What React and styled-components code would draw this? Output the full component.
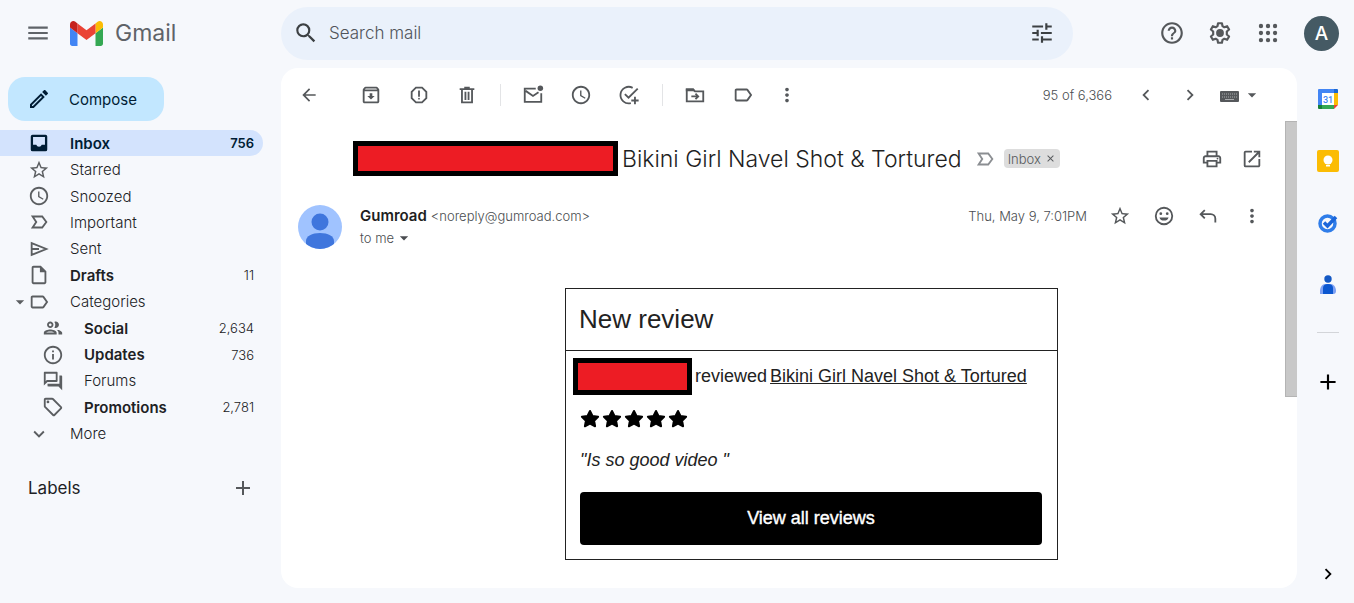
import React from "react";
import styled, { createGlobalStyle } from "styled-components";
import {
  MdMenu, MdOutlineEdit, MdStarBorder, MdAccessTime,
  MdOutlineInsertDriveFile, MdLabelOutline, MdOutlinePeople, MdInfoOutline, MdOutlineForum,
  MdExpandMore, MdAdd, MdSearch, MdTune, MdHelpOutline, MdArrowBack,
  MdOutlineArchive, MdOutlineReport, MdMoreVert, MdChevronLeft, MdChevronRight,
  MdArrowDropDown, MdOutlinePrint, MdOpenInNew, MdOutlineSell, MdClose,
} from "react-icons/md";

const UI = `Inter, "Noto Sans", sans-serif`;
const MAIL = `"Liberation Sans", Arial, sans-serif`;

const GlobalStyle = createGlobalStyle`
  * { box-sizing: border-box; }
  html, body, #root { height: 100%; }
  body { margin: 0; background: #f6f8fc; color: #202124; font-family: ${UI}; font-size: 15px; }
  button { font: inherit; color: inherit; border: 0; padding: 0; background: none; cursor: pointer; }
  a { color: inherit; text-decoration: none; }
  h1, h2, h3, p, ul { margin: 0; padding: 0; font-weight: 400; }
  ul { list-style: none; }
  svg { display: block; flex: none; }
`;

const Page = styled.div`
  min-height: 100%;
  display: flex;
  flex-direction: column;
`;
const Header = styled.header`
  display: flex;
  align-items: center;
  height: 66px;
  margin-bottom: 2px;
  padding-right: 15px;
`;
const Brand = styled.div`
  display: flex;
  align-items: center;
  flex: none;
  width: 281px;
  padding-left: 14px;
  color: #5f6368;
`;
const Logo = styled.a`
  display: flex;
  align-items: center;
  gap: 12px;
  margin-left: 8px;
  font-size: 23px;
  color: #5f6368;
`;
const IconButton = styled.button`
  display: flex;
  align-items: center;
  justify-content: center;
  flex: none;
  width: ${(p) => p.$w || 48}px;
  height: 34px;
  color: ${(p) => p.$color || "#55585b"};
`;
const Search = styled.form`
  display: flex;
  align-items: center;
  flex: 1;
  max-width: 792px;
  height: 53px;
  padding: 0 7px 0 2px;
  border-radius: 27px;
  background: #eaf1fb;
`;
const SearchInput = styled.input`
  flex: 1;
  min-width: 0;
  border: 0;
  outline: 0;
  padding: 0;
  background: none;
  font: 300 17px ${UI};
  color: #444746;
  &::placeholder { color: #50545a; opacity: 1; }
`;
const HeaderActions = styled.div`
  display: flex;
  align-items: center;
  margin-left: auto;
`;
const Account = styled.button`
  width: 35px;
  height: 35px;
  margin-left: 12px;
  border-radius: 50%;
  background: #455a64;
  color: #fff;
  font-size: 19px;
  font-weight: 500;
`;

const Body = styled.div`
  display: flex;
  flex: 1;
`;
const Sidebar = styled.aside`
  flex: none;
  width: 281px;
  padding: 9px 18px 0 0;
`;
const Compose = styled.button`
  display: flex;
  align-items: center;
  gap: 18px;
  width: 156px;
  height: 44px;
  margin: 0 0 9px 8px;
  padding-left: 19px;
  border-radius: 17px;
  background: #c2e7ff;
  color: #001d35;
`;
const NavList = styled.ul`
  display: grid;
  grid-auto-rows: 1fr;
  min-height: 317px;
`;
const NavLink = styled.a`
  display: flex;
  align-items: center;
  height: 100%;
  padding: 0 9px 0 ${(p) => (p.$nested ? 28 : 14)}px;
  border-radius: 0 13px 13px 0;
  background: ${(p) => (p.$active ? "#d3e3fd" : "none")};
  color: ${(p) => (p.$active ? "#001d35" : "#202124")};
  font-weight: ${(p) => (p.$bold ? 600 : 300)};
`;
const NavIcon = styled.span`
  position: relative;
  display: flex;
  justify-content: center;
  width: 50px;
  color: ${(p) => (p.$active ? "#001d35" : "#5b5e61")};
`;
const Caret = styled.span`
  position: absolute;
  left: -4px;
  top: 1px;
`;
const NavLabel = styled.span`
  flex: 1;
  padding-left: 6px;
`;
const Count = styled.span`
  font-size: 13px;
  font-weight: ${(p) => (p.$active ? 600 : 300)};
`;
const LabelsHead = styled.div`
  display: flex;
  align-items: center;
  justify-content: space-between;
  height: 40px;
  margin-top: 21px;
  padding-left: 28px;
  color: #202124;
`;
const LabelsTitle = styled.h2`
  font-size: 17px;
`;

const Main = styled.main`
  display: flex;
  flex-direction: column;
  flex: 1;
  min-width: 0;
  margin-bottom: 15px;
  border-radius: 17px;
  background: #fff;
  overflow: hidden;
`;
const Toolbar = styled.div`
  display: flex;
  align-items: center;
  height: 53px;
  padding: 0 35px 0 4px;
`;
const Group = styled.div`
  display: flex;
  align-items: center;
  margin-left: ${(p) => p.$gap || 0}px;
`;
const Divider = styled.span`
  width: 1px;
  height: 22px;
  margin: 0 8px 0 9px;
  background: #e3e4e6;
`;
const Pager = styled.div`
  display: flex;
  align-items: center;
  margin-left: auto;
  font-size: 13px;
  font-weight: 300;
  color: #4a4d50;
`;
const InputTools = styled.button`
  display: flex;
  align-items: center;
  margin-left: 6px;
  color: #55585b;
`;

const Scroll = styled.div`
  display: flex;
  flex: 1;
`;
const Track = styled.div`
  width: 12px;
`;
const Thumb = styled.div`
  height: 59%;
  background: #c8c8c8;
  border: solid #b4b4b4;
  border-width: 1px 0 1px 1px;
`;
const Thread = styled.article`
  flex: 1;
  min-width: 0;
`;
const SubjectRow = styled.div`
  display: flex;
  align-items: center;
  padding: 20px 13px 0 72px;
`;
const Redaction = styled.span`
  flex: none;
  width: ${(p) => p.$w}px;
  height: ${(p) => p.$h}px;
  border: 5px solid #000;
  background: #ed1c24;
`;
const Subject = styled.h1`
  margin: 0 12px 0 4px;
  font-size: 23px;
  line-height: 32px;
  font-weight: 300;
  white-space: nowrap;
  color: #1f1f1f;
`;
const Chip = styled.button`
  display: flex;
  align-items: center;
  gap: 4px;
  height: 19px;
  margin-left: 8px;
  padding: 0 4px;
  border-radius: 4px;
  background: #ddd;
  color: #55585b;
  font-size: 13px;
  font-weight: 300;
`;
const Actions = styled.div`
  display: flex;
  align-items: center;
  margin-left: auto;
`;
const SenderRow = styled.div`
  display: flex;
  align-items: flex-start;
  padding: 23px 11px 0 17px;
`;
const SenderText = styled.div`
  padding: 6px 0 0 18px;
  font-size: 13px;
  font-weight: 300;
  line-height: 22px;
  color: #4a4d50;
`;
const SenderName = styled.h3`
  display: inline;
  margin-right: 4px;
  font-size: 15px;
  font-weight: 600;
  color: #1f1f1f;
`;
const Recipient = styled.button`
  display: flex;
  align-items: center;
`;
const SenderAvatar = styled.span`
  margin-top: 6px;
`;
const DateText = styled.time`
  margin-right: 11px;
  font-size: 13px;
  font-weight: 300;
  color: #4a4d50;
`;
const MailBody = styled.div`
  display: flex;
  justify-content: center;
  padding: 39px 22px 27px 79px;
  font-family: ${MAIL};
  font-size: 18px;
  color: #222;
`;
const ReviewCard = styled.section`
  flex: 0 1 493px;
  border: 1px solid #222;
`;
const ReviewTitle = styled.h2`
  padding: 0 13px;
  border-bottom: 1px solid #222;
  font-size: 26px;
  line-height: 61px;
`;
const ReviewContent = styled.div`
  padding: 7px 15px 14px 14px;
`;
const ReviewLine = styled.p`
  display: flex;
  align-items: center;
  gap: 3px;
  margin-left: -7px;
  white-space: nowrap;
`;
const ReviewLink = styled.a`
  text-decoration: underline;
`;
const Stars = styled.div`
  display: flex;
  gap: 2px;
  margin-top: 14px;
  color: #000;
`;
const Quote = styled.p`
  margin: 20px 0 21px;
  line-height: 22px;
  font-style: italic;
`;
const ViewAll = styled.button`
  width: 100%;
  height: 53px;
  border-radius: 4px;
  background: #000;
  color: #fff;
  -webkit-text-stroke: 0.4px #fff;
`;

const Rail = styled.aside`
  display: flex;
  flex-direction: column;
  align-items: center;
  flex: none;
  width: 57px;
  padding: 14px 0 12px 5px;
`;
const RailApps = styled.div`
  display: flex;
  flex-direction: column;
  gap: 28px;
`;
const RailLine = styled.hr`
  width: 22px;
  margin: 30px 0 32px;
  border: 0;
  border-top: 1px solid #d3d5d9;
`;
const RailBottom = styled.div`
  margin-top: auto;
`;

const Svg = ({ size = 22, box = 24, children, ...rest }) => (
  <svg width={size} height={size} viewBox={`0 0 ${box} ${box}`} fill="none" stroke="currentColor" strokeWidth="2" {...rest}>
    {children}
  </svg>
);

const GmailMark = () => (
  <svg width="33" height="25" viewBox="52 42 88 66">
    <path fill="#4285f4" d="M58 108h14V74L52 59v43c0 3.32 2.69 6 6 6" />
    <path fill="#34a853" d="M120 108h14c3.32 0 6-2.69 6-6V59l-20 15" />
    <path fill="#fbbc04" d="M120 48v26l20-15v-8c0-7.42-8.47-11.65-14.4-7.2" />
    <path fill="#ea4335" d="M72 74V48l24 18 24-18v26L96 92" />
    <path fill="#c5221f" d="M52 51v8l20 15V48l-5.6-4.2c-5.94-4.45-14.4-.22-14.4 7.2" />
  </svg>
);
const InboxTray = () => (
  <Svg>
    <path
      fill="currentColor"
      stroke="none"
      fillRule="evenodd"
      d="M5 3h14a2 2 0 0 1 2 2v14a2 2 0 0 1-2 2H5a2 2 0 0 1-2-2V5a2 2 0 0 1 2-2zM5.500 5.500V14H9a3.200 3.200 0 0 0 6 0h3.500V5.500z"
    />
  </Svg>
);
const Important = ({ size = 22, ...rest }) => (
  <Svg size={size} {...rest}><path d="M5 6h10.500l4.500 6-4.500 6H5l4-6z" /></Svg>
);
const Send = () => (
  <Svg><path d="M4 5.500L20 12 4 18.500zM4 12h8" /></Svg>
);
const Apps = () => (
  <Svg size={26} fill="currentColor" stroke="none">
    {[5.5, 12, 18.5].map((y) => [5.5, 12, 18.5].map((x) => <circle key={`${x}-${y}`} cx={x} cy={y} r="2" />))}
  </Svg>
);
const Keyboard = () => (
  <svg width="24" height="24" viewBox="0 0 24 24">
    <rect x="2" y="8" width="19" height="11" rx="1" fill="#55585b" />
    <path d="M4 11h15M4 14h15" stroke="#a9abad" strokeWidth="1" strokeDasharray="1 1" />
    <path d="M7 16.500h9" stroke="#a9abad" />
  </svg>
);
const Trash = () => (
  <Svg><path d="M6.5 6.5v13.5h11V6.5M4 5.5h16M9 4h6M10.3 8.5v9M13.7 8.5v9" /></Svg>
);
const MailUnread = () => (
  <Svg>
    <path d="M15 5H3v14.500h18V10M4 7.500l8 5.500 6-4" />
    <circle cx="20" cy="4.500" r="3" fill="currentColor" stroke="none" />
  </Svg>
);
const AddTask = () => (
  <Svg><path d="M16 4.200A9 9 0 1 0 14 20.800M7.500 11l4 4L21.500 5M18.500 14v8M14.500 18h8" /></Svg>
);
const MoveTo = () => (
  <Svg>
    <path d="M3 6h7l2 2h9v11H3zM8 13.500h7M12.500 10.500l3 3-3 3" />
    <path d="M2 5h8.500l2 3H2z" fill="currentColor" stroke="none" />
  </Svg>
);
const Gear = () => (
  <Svg size={26}>
    <path strokeLinejoin="round" d="M10.200 3h3.600l.5 2.700 1.700 1 2.600-1 1.800 3.100-2.100 1.800v2.800l2.100 1.800-1.800 3.100-2.600-1-1.700 1-.5 2.700h-3.600l-.5-2.700-1.700-1-2.600 1-1.800-3.100 2.100-1.800v-2.800L3.600 8.800l1.800-3.100 2.600 1 1.700-1z" />
    <circle cx="12" cy="12" r="3.600" fill="currentColor" stroke="none" />
  </Svg>
);
const Smile = () => (
  <Svg>
    <circle cx="12" cy="12" r="9" />
    <circle cx="8.500" cy="9.500" r="1.500" fill="currentColor" stroke="none" />
    <circle cx="15.500" cy="9.500" r="1.500" fill="currentColor" stroke="none" />
    <path d="M7 13.500h10a5.300 5.300 0 0 1-10 0z" fill="currentColor" stroke="none" />
  </Svg>
);
const ReplyArrow = () => (
  <Svg><path d="M8.500 5.500l-4.500 4.500 4.500 4.500M4 10h11a5 5 0 0 1 5 5v4" /></Svg>
);
const Person = () => (
  <svg width="44" height="44" viewBox="0 0 44 44">
    <clipPath id="round"><circle cx="22" cy="22" r="22" /></clipPath>
    <g clipPath="url(#round)">
      <rect width="44" height="44" fill="#a0c3ff" />
      <circle cx="22" cy="17" r="8.500" fill="#3f76dd" />
      <path fill="#3f76dd" d="M8 44V36c0-5 6-8 14-8s14 3 14 8v8z" />
    </g>
  </svg>
);
const Calendar = () => (
  <svg width="22" height="22" viewBox="0 0 22 22">
    <path fill="#4285f4" d="M2 1h15v4H5v12H1V2a1 1 0 0 1 1-1z" />
    <path fill="#1967d2" d="M17 1h3a1 1 0 0 1 1 1v3h-4z" />
    <path fill="#fbbc04" d="M17 5h4v12h-4z" />
    <path fill="#34a853" d="M5 17h12v4H5z" />
    <path fill="#188038" d="M1 17h4v4H2a1 1 0 0 1-1-1z" />
    <path fill="#ea4335" d="M17 17h4l-4 4z" />
    <path fill="#fff" d="M5 5h12v12H5z" />
    <text x="11" y="14.500" textAnchor="middle" fontFamily="Roboto, sans-serif" fontSize="9" fontWeight="500" fill="#4285f4">31</text>
  </svg>
);
const Keep = () => (
  <svg width="22" height="22" viewBox="0 0 22 22">
    <rect x="0" y="0" width="22" height="22" rx="2" fill="#fbbc04" />
    <circle cx="11" cy="10" r="4.500" fill="#fff" />
    <path fill="#fff" d="M9 13h4v1H9zM9 15h4v1.500H9z" />
  </svg>
);
const Tasks = () => (
  <svg width="22" height="22" viewBox="0 0 22 22" fill="none">
    <circle cx="10.500" cy="11.500" r="7.500" stroke="#2f7de9" strokeWidth="3.500" />
    <path d="M7 10.500l3.500 3.500L19 5" stroke="#1b66da" strokeWidth="3.500" />
  </svg>
);
const Contacts = () => (
  <svg width="22" height="22" viewBox="0 0 22 22">
    <circle cx="11" cy="5" r="3.700" fill="#1358c4" />
    <path fill="#7ea1f3" d="M3 20v-3c0-4 2.500-7 5-7h6c2.500 0 5 3 5 7 0 2-1 3-2.500 3z" />
    <path fill="#0b57d0" d="M6 20v-6c0-2.500 2-4 5-4s5 1.500 5 4v6z" />
  </svg>
);

const NAV = [
  { label: "Inbox", icon: InboxTray, count: "756", active: true, bold: true },
  { label: "Starred", icon: MdStarBorder },
  { label: "Snoozed", icon: MdAccessTime },
  { label: "Important", icon: Important },
  { label: "Sent", icon: Send },
  { label: "Drafts", icon: MdOutlineInsertDriveFile, count: "11", bold: true },
  { label: "Categories", icon: MdLabelOutline, caret: true },
  { label: "Social", icon: MdOutlinePeople, count: "2,634", bold: true, nested: true },
  { label: "Updates", icon: MdInfoOutline, count: "736", bold: true, nested: true },
  { label: "Forums", icon: MdOutlineForum, nested: true },
  { label: "Promotions", icon: MdOutlineSell, count: "2,781", bold: true, nested: true },
  { label: "More", icon: MdExpandMore },
];

const Tool = ({ label, children, ...rest }) => (
  <IconButton type="button" aria-label={label} {...rest}>{children}</IconButton>
);

export default function App() {
  return (
    <Page>
      <GlobalStyle />
      <Header>
        <Brand>
          <Tool label="Main menu" $color="#5f6368"><MdMenu size={26} /></Tool>
          <Logo href="#"><GmailMark />Gmail</Logo>
        </Brand>
        <Search role="search">
          <Tool label="Search" $w={46} $color="#3c4043"><MdSearch size={26} /></Tool>
          <SearchInput type="text" aria-label="Search mail" placeholder="Search mail" />
          <Tool label="Search options" $color="#3c4043"><MdTune size={26} /></Tool>
        </Search>
        <HeaderActions>
          <Tool label="Support"><MdHelpOutline size={26} /></Tool>
          <Tool label="Settings"><Gear /></Tool>
          <Tool label="Apps"><Apps /></Tool>
          <Account type="button" aria-label="Account">A</Account>
        </HeaderActions>
      </Header>
      <Body>
        <Sidebar>
          <Compose type="button"><MdOutlineEdit size={24} />Compose</Compose>
          <nav>
            <NavList>
              {NAV.map(({ label, icon: Icon, count, active, bold, nested, caret }) => (
                <li key={label}>
                  <NavLink href="#" $active={active} $bold={bold} $nested={nested}>
                    <NavIcon $active={active}>
                      {caret && <Caret><MdArrowDropDown size={20} /></Caret>}
                      <Icon size={22} />
                    </NavIcon>
                    <NavLabel>{label}</NavLabel>
                    {count && <Count $active={active}>{count}</Count>}
                  </NavLink>
                </li>
              ))}
            </NavList>
          </nav>
          <LabelsHead>
            <LabelsTitle>Labels</LabelsTitle>
            <Tool label="Create label" $w={40}><MdAdd size={24} /></Tool>
          </LabelsHead>
        </Sidebar>
        <Main>
          <Toolbar>
            <Tool label="Back"><MdArrowBack size={20} /></Tool>
            <Group $gap={14}>
              <Tool label="Archive"><MdOutlineArchive size={22} /></Tool>
              <Tool label="Report spam"><MdOutlineReport size={22} /></Tool>
              <Tool label="Delete"><Trash /></Tool>
            </Group>
            <Divider />
            <Group>
              <Tool label="Mark as unread"><MailUnread /></Tool>
              <Tool label="Snooze"><MdAccessTime size={22} /></Tool>
              <Tool label="Add to tasks"><AddTask /></Tool>
            </Group>
            <Divider />
            <Group>
              <Tool label="Move to"><MoveTo /></Tool>
              <Tool label="Labels"><MdLabelOutline size={22} /></Tool>
              <Tool label="More" $w={40}><MdMoreVert size={22} /></Tool>
            </Group>
            <Pager>
              95 of 6,366
              <Group $gap={12}>
                <Tool label="Newer" $w={44}><MdChevronLeft size={22} /></Tool>
                <Tool label="Older" $w={44}><MdChevronRight size={22} /></Tool>
              </Group>
              <InputTools type="button" aria-label="Input tools">
                <Keyboard /><MdArrowDropDown size={20} />
              </InputTools>
            </Pager>
          </Toolbar>
          <Scroll>
            <Thread>
              <SubjectRow>
                <Redaction $w={265} $h={35} />
                <Subject>Bikini Girl Navel Shot &amp; Tortured</Subject>
                <Important color="#8b8e92" />
                <Chip type="button">Inbox <MdClose size={11} /></Chip>
                <Actions>
                  <Tool label="Print" $w={40}><MdOutlinePrint size={22} /></Tool>
                  <Tool label="Open in new window" $w={40}><MdOpenInNew size={22} /></Tool>
                </Actions>
              </SubjectRow>
              <SenderRow>
                <SenderAvatar><Person /></SenderAvatar>
                <SenderText>
                  <div><SenderName>Gumroad</SenderName>&lt;noreply@gumroad.com&gt;</div>
                  <Recipient type="button">to me <MdArrowDropDown size={20} /></Recipient>
                </SenderText>
                <Actions>
                  <DateText>Thu, May 9, 7:01PM</DateText>
                  <Tool label="Star" $w={44}><MdStarBorder size={22} /></Tool>
                  <Tool label="Add reaction" $w={44}><Smile /></Tool>
                  <Tool label="Reply" $w={44}><ReplyArrow /></Tool>
                  <Tool label="More" $w={44}><MdMoreVert size={22} /></Tool>
                </Actions>
              </SenderRow>
              <MailBody>
                <ReviewCard>
                  <ReviewTitle>New review</ReviewTitle>
                  <ReviewContent>
                    <ReviewLine>
                      <Redaction $w={119} $h={37} />
                      reviewed <ReviewLink href="#">Bikini Girl Navel Shot &amp; Tortured</ReviewLink>
                    </ReviewLine>
                    <Stars role="img" aria-label="5 stars">
                      {[1, 2, 3, 4, 5].map((n) => (
                        <Svg key={n} size={20} box={20} fill="currentColor" strokeLinejoin="round">
                          <path d="M10 2l2.500 5 5.600.8-4 4 1 5.500-5.100-2.600L4.900 17.300l1-5.500-4-4L7.500 7z" />
                        </Svg>
                      ))}
                    </Stars>
                    <Quote>"Is so good video "</Quote>
                    <ViewAll type="button">View all reviews</ViewAll>
                  </ReviewContent>
                </ReviewCard>
              </MailBody>
            </Thread>
            <Track><Thumb /></Track>
          </Scroll>
        </Main>
        <Rail>
          <RailApps>
            <Tool label="Calendar" $w={40}><Calendar /></Tool>
            <Tool label="Keep" $w={40}><Keep /></Tool>
            <Tool label="Tasks" $w={40}><Tasks /></Tool>
            <Tool label="Contacts" $w={40}><Contacts /></Tool>
          </RailApps>
          <RailLine />
          <Tool label="Get add-ons" $w={40} $color="#000"><MdAdd size={26} /></Tool>
          <RailBottom>
            <Tool label="Hide side panel" $w={40} $color="#000"><MdChevronRight size={22} /></Tool>
          </RailBottom>
        </Rail>
      </Body>
    </Page>
  );
}
